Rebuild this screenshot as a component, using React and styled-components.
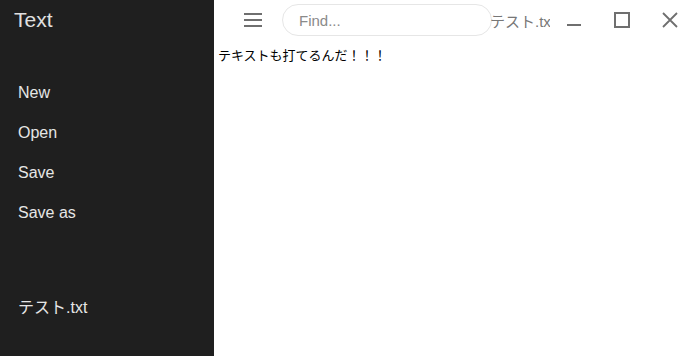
import React, { useState } from "react";
import styled, { createGlobalStyle } from "styled-components";

const GlobalStyle = createGlobalStyle`
  html, body {
    margin: 0;
    padding: 0;
    height: 100%;
    overflow: hidden;
  }
  #root {
    height: 100%;
  }
`;

const Shell = styled.div`
  display: flex;
  height: 100vh;
  width: 100vw;
  overflow: hidden;
  font-family: "Liberation Sans", "Noto Sans CJK JP", sans-serif;
  background: #ffffff;
`;

const Sidebar = styled.aside`
  flex: 0 0 214px;
  background: #1f1f1f;
  color: #e4e4e4;
  display: flex;
  flex-direction: column;
`;

const Brand = styled.h1`
  margin: 0;
  padding: 8px 14px 0;
  height: 32px;
  font-size: 21px;
  font-weight: 400;
  line-height: 24px;
  color: #e0e0e0;
`;

const MenuList = styled.ul`
  list-style: none;
  margin: 33px 0 0;
  padding: 0;
  display: flex;
  flex-direction: column;
`;

const MenuItem = styled.li`
  height: 40px;
  padding: 0 18px;
  font-size: 16px;
  line-height: 40px;
  color: #e6e6e6;
  cursor: pointer;
`;

const FileList = styled.ul`
  list-style: none;
  margin: 55px 0 0;
  padding: 0;
`;

const Main = styled.main`
  flex: 1;
  display: flex;
  flex-direction: column;
  min-width: 0;
`;

const Header = styled.header`
  height: 40px;
  display: flex;
  align-items: center;
  padding-left: 15px;
  flex-shrink: 0;
`;

const IconButton = styled.button`
  flex: 0 0 48px;
  height: 40px;
  border: none;
  background: transparent;
  padding: 0;
  display: flex;
  align-items: center;
  justify-content: center;
  color: #6f6f6f;
  cursor: pointer;
`;

const Search = styled.input`
  flex: 0 0 210px;
  box-sizing: border-box;
  width: 210px;
  height: 32px;
  margin-left: 5px;
  border: 1px solid #e6e6e6;
  border-radius: 16px;
  padding: 0 16px;
  font-family: "Liberation Sans", sans-serif;
  font-size: 15px;
  color: #333;
  outline: none;
  background: transparent;

  &::placeholder {
    color: #8a8a8a;
  }
`;

const FileTitle = styled.div`
  flex: 0 0 60px;
  margin-left: -2px;
  overflow: hidden;
  white-space: nowrap;
  font-size: 15px;
  color: #777777;
`;

const Editor = styled.textarea`
  flex: 1;
  border: none;
  outline: none;
  resize: none;
  margin: 0;
  padding: 6px 4px;
  font-family: "Liberation Sans", "Noto Sans CJK JP", sans-serif;
  font-size: 13px;
  line-height: 20px;
  color: #000;
  background: #fff;
`;

const HamburgerIcon = () => (
  <svg width="18" height="14" viewBox="0 0 18 14">
    <rect x="0" y="0" width="18" height="2" fill="currentColor" />
    <rect x="0" y="6" width="18" height="2" fill="currentColor" />
    <rect x="0" y="12" width="18" height="2" fill="currentColor" />
  </svg>
);

const MinimizeIcon = () => (
  <svg width="14" height="14" viewBox="0 0 14 14" style={{ marginTop: 10 }}>
    <rect x="0" y="6" width="14" height="2" fill="currentColor" />
  </svg>
);

const MaximizeIcon = () => (
  <svg width="16" height="16" viewBox="0 0 16 16">
    <rect x="1" y="1" width="14" height="14" fill="none" stroke="currentColor" strokeWidth="2" />
  </svg>
);

const CloseIcon = () => (
  <svg width="16" height="16" viewBox="0 0 16 16">
    <path d="M1 1 L15 15 M15 1 L1 15" stroke="currentColor" strokeWidth="1.8" />
  </svg>
);

export default function App() {
  const [text, setText] = useState("テキストも打てるんだ！！！");
  const menu = ["New", "Open", "Save", "Save as"];

  return (
    <Shell>
      <GlobalStyle />
      <Sidebar>
        <Brand>Text</Brand>
        <MenuList>
          {menu.map((m) => (
            <MenuItem key={m}>{m}</MenuItem>
          ))}
        </MenuList>
        <FileList>
          <MenuItem>テスト.txt</MenuItem>
        </FileList>
      </Sidebar>
      <Main>
        <Header>
          <IconButton aria-label="menu">
            <HamburgerIcon />
          </IconButton>
          <Search placeholder="Find..." />
          <FileTitle>テスト.txt</FileTitle>
          <IconButton aria-label="minimize">
            <MinimizeIcon />
          </IconButton>
          <IconButton aria-label="maximize">
            <MaximizeIcon />
          </IconButton>
          <IconButton aria-label="close">
            <CloseIcon />
          </IconButton>
        </Header>
        <Editor value={text} onChange={(e) => setText(e.target.value)} spellCheck={false} />
      </Main>
    </Shell>
  );
}
